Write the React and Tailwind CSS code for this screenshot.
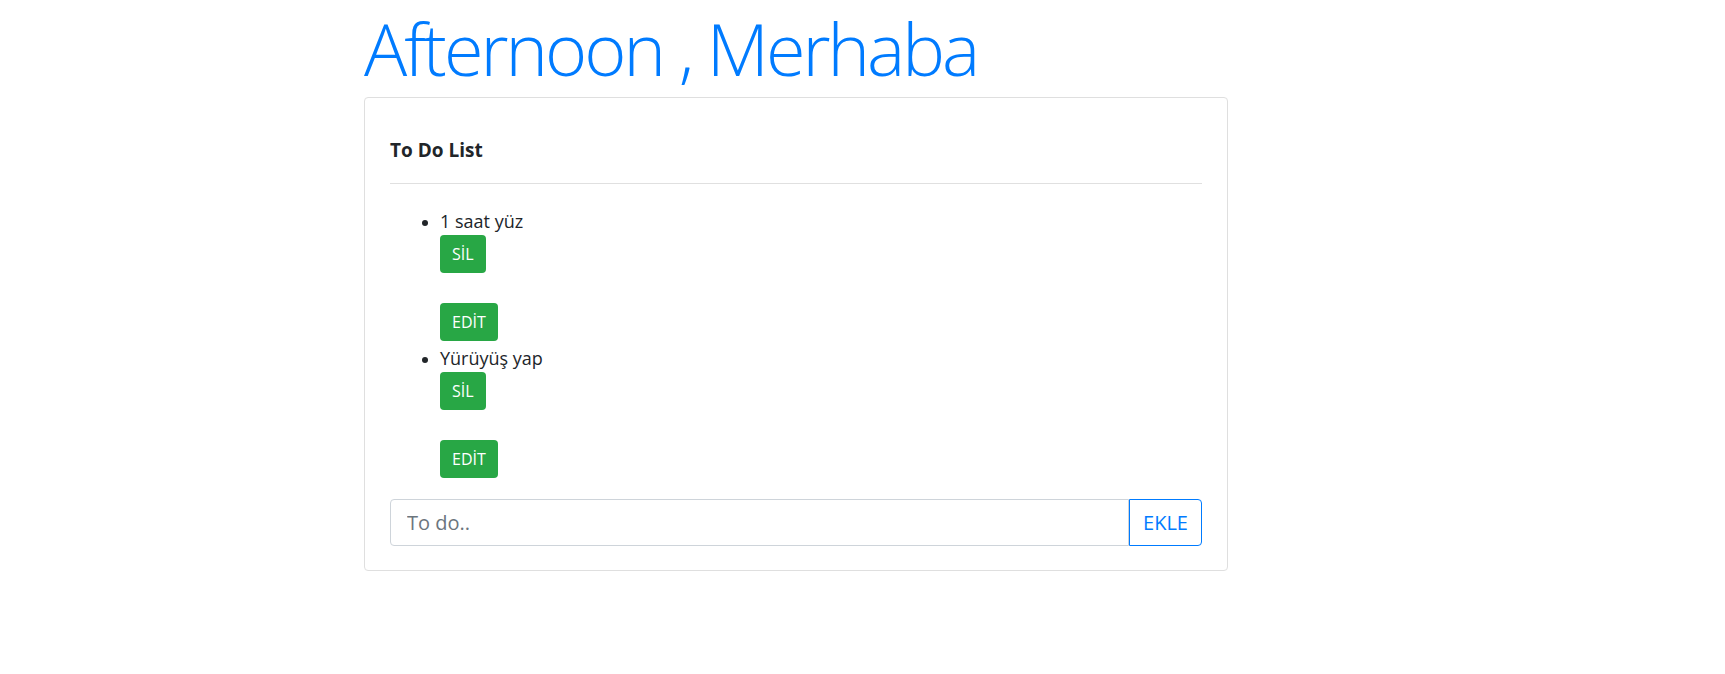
const todos = ["1 saat yüz", "Yürüyüş yap"];

const TodoItem = ({ text, first }) => {
  return (
    <li className={first ? "" : "mt-[5px]"}>
      <div className="flex flex-col items-start">
        <span className="leading-6 text-[18px]">{text}</span>
        <button className="mt-[2px] h-[38px] px-3 rounded bg-[#28a745] text-white text-[16px] leading-6">
          SİL
        </button>
        <button className="mt-[30px] h-[38px] px-3 rounded bg-[#28a745] text-white text-[16px] leading-6">
          EDİT
        </button>
      </div>
    </li>
  );
};

const App = () => {
  return (
    <div className="min-h-screen bg-white text-[#212529] font-['Open_Sans','Noto_Sans',sans-serif]">
      <div className="ml-[364px] w-[864px]">
        <h1 className="text-[#007bff] text-[72px] font-light leading-[92px] pt-[2px] mb-[3px] tracking-[-3px]">
          Afternoon , Merhaba
        </h1>
        <div className="border border-[#dfdfdf] rounded px-[25px] pt-[40px] pb-[24px]">
          <h5 className="text-[19px] font-bold leading-6 text-[#212529]">To Do List</h5>
          <hr className="mt-[21px] border-t border-[#e0e0e0]" />
          <ul className="list-disc pl-[50px] mt-[25px]">
            {todos.map((t, i) => (
              <TodoItem key={t} text={t} first={i === 0} />
            ))}
          </ul>
          <div className="flex mt-[21px]">
            <input
              type="text"
              placeholder="To do.."
              className="flex-1 h-[47px] px-4 text-[20px] border border-[#ced4da] rounded-l placeholder:text-[#6c757d] outline-none"
            />
            <button className="h-[47px] w-[73px] border border-[#007bff] text-[#007bff] text-[20px] rounded-r">
              EKLE
            </button>
          </div>
        </div>
      </div>
    </div>
  );
};

export default App;
